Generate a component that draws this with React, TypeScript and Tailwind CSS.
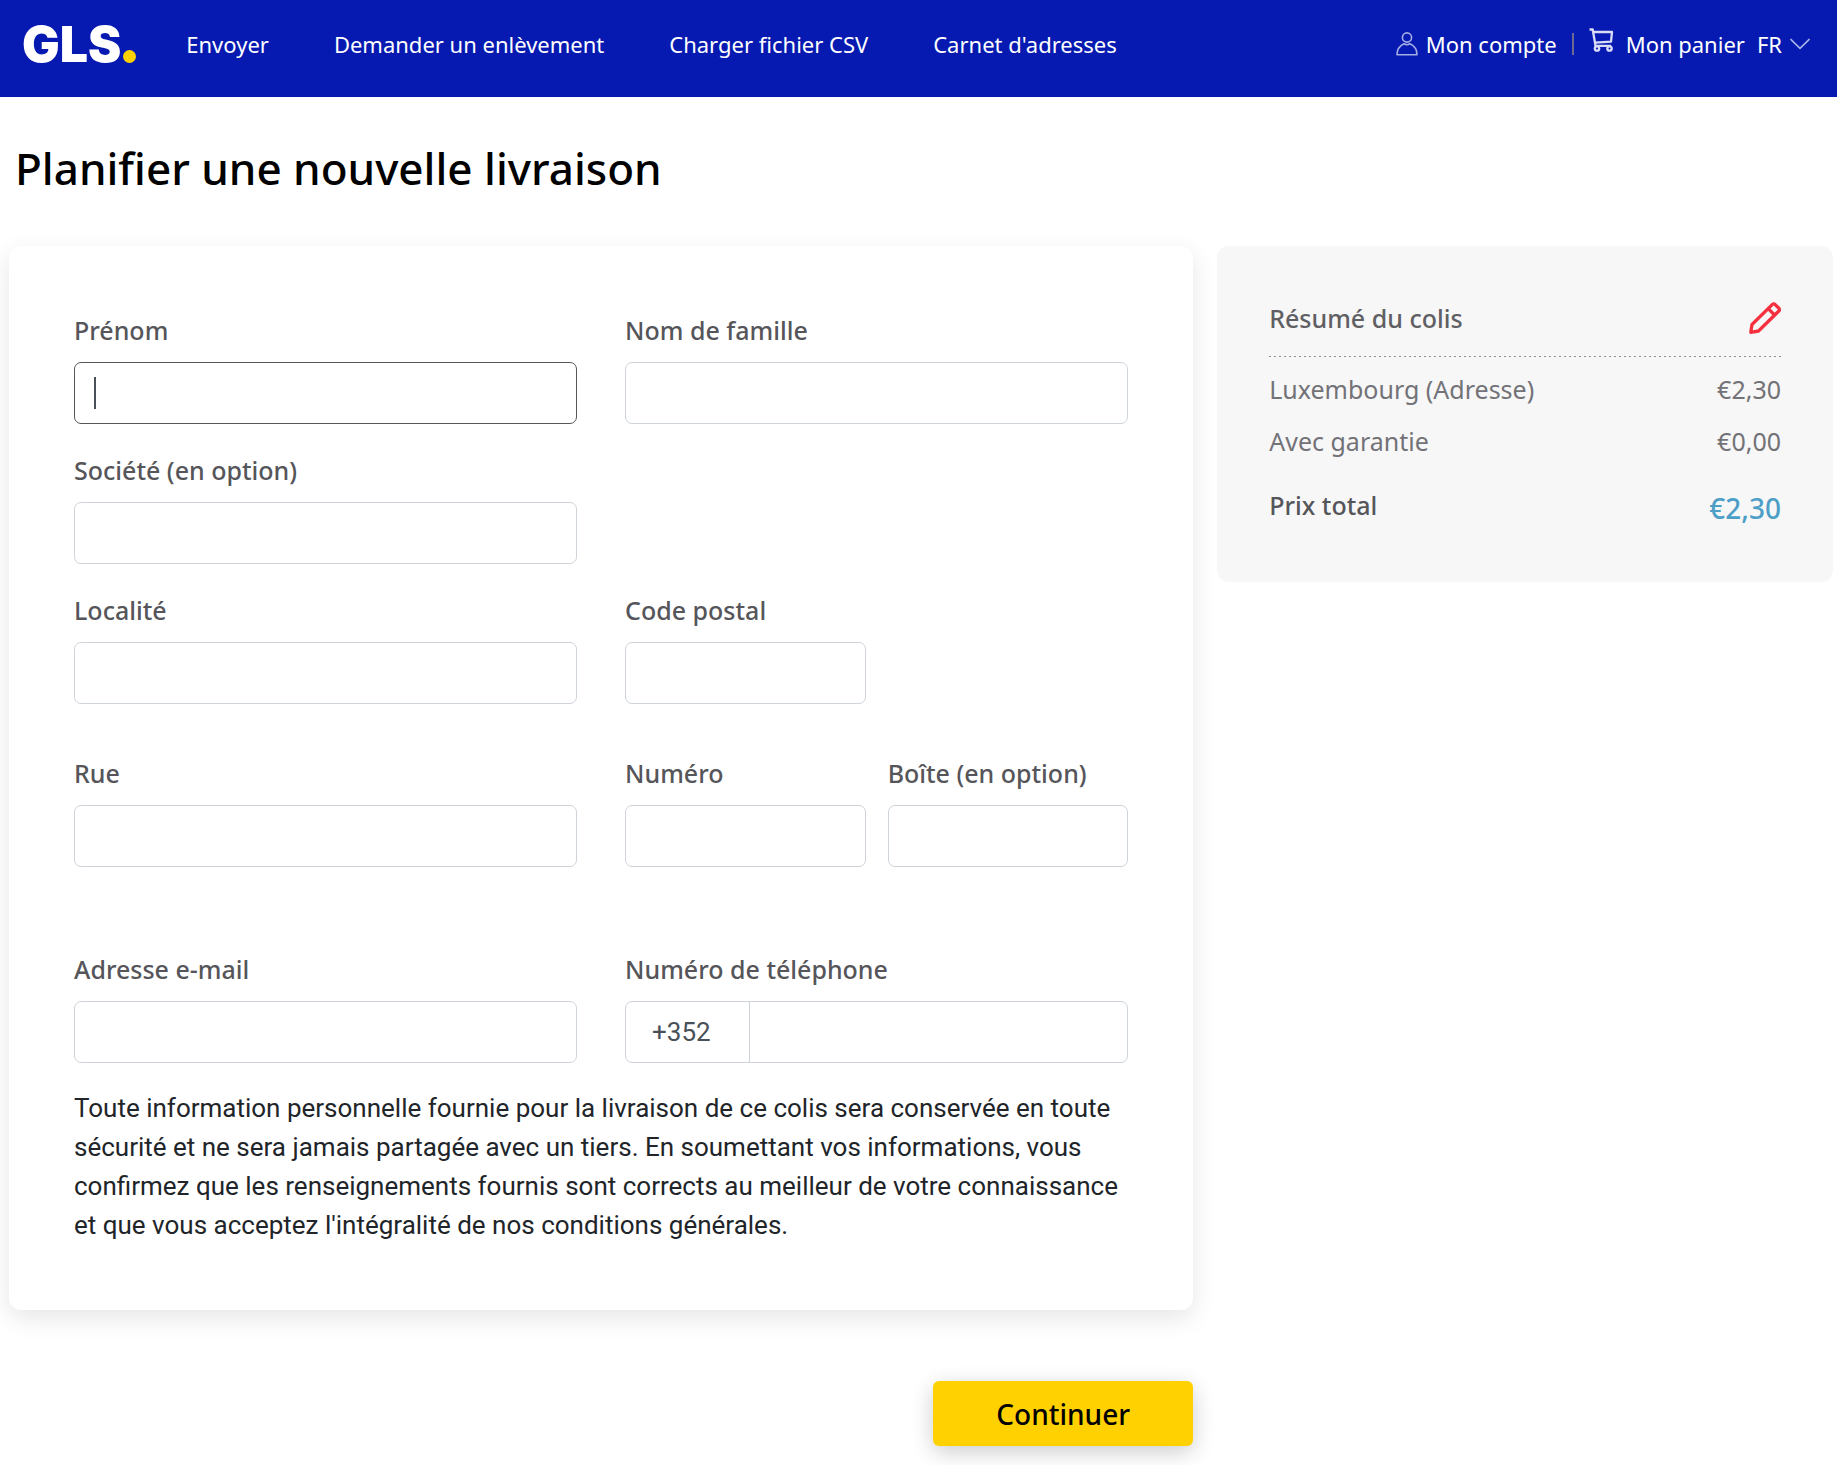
import React from 'react';

const NAV_LINKS = ['Envoyer', 'Demander un enlèvement', 'Charger fichier CSV', "Carnet d'adresses"];

const SUMMARY_LINES = [
  { label: 'Luxembourg (Adresse)', price: '€2,30' },
  { label: 'Avec garantie', price: '€0,00' },
];

const UserIcon: React.FC = () => (
  <svg viewBox="0 0 22 24" className="w-[22px] h-6" fill="none" stroke="#a3ace4" strokeWidth="1.6">
    <circle cx="11" cy="5.5" r="4.6" />
    <path d="M1 22.8c0-5.4 2.8-9 7-11 1.8 1.1 4.2 1.1 6 0 4.2 2 7 5.6 7 11z" strokeLinejoin="round" />
  </svg>
);

const CartIcon: React.FC = () => (
  <svg viewBox="0 0 25 24" className="w-[25px] h-6 mb-2" fill="none" stroke="#d8dcf6" strokeWidth="2.3">
    <path d="M0.5 1.5h3.2l2.8 16.3h15.5" strokeLinejoin="round" />
    <path d="M4.2 4h18.8l-1 9.6-16 1" strokeLinejoin="round" />
    <circle cx="8" cy="20.5" r="2.2" />
    <circle cx="20.5" cy="20.5" r="2.2" />
  </svg>
);

const ChevronIcon: React.FC = () => (
  <svg viewBox="0 0 20 12" className="w-5 h-3" fill="none" stroke="#aab3e6" strokeWidth="1.6">
    <path d="M0.5 1 10 10.3 19.5 1" />
  </svg>
);

const PencilIcon: React.FC = () => (
  <svg viewBox="0 0 32 32" className="w-8 h-8" fill="none" stroke="#f5303f" strokeWidth="3.3" strokeLinejoin="round">
    <path d="M1.8 30.3 3 22.5 23.2 2.6c1-1 2-1 3 0l3.4 3.4c1.2 1.2 1.2 2.2 0 3.2L9.5 29z" />
    <path d="M19.2 6.6 25.6 13" />
  </svg>
);

const Header: React.FC = () => (
  <header className="flex items-start justify-between bg-[#061ab1] pl-[22px] pr-[27px] h-[97px] text-white text-[22px] leading-[30px]">
    <div className="flex items-start">
      <a href="#" className="flex items-end gap-[2px] pt-[14px]">
        <span className="font-[Inter] font-black text-[50px] leading-[60px]">GLS</span>
        <span className="w-[13px] h-[13px] mb-[11px] rounded-full bg-[#ffd100]" />
      </a>
      <nav className="flex gap-[65px] pt-[29px] pl-[50px]">
        {NAV_LINKS.map((link) => (
          <a key={link} href="#">{link}</a>
        ))}
      </nav>
    </div>
    <div className="flex items-center pt-7">
      <a href="#" className="flex items-center gap-2">
        <UserIcon />
        Mon compte
      </a>
      <span className="w-[2px] h-[22px] mx-[15px] bg-[#6b6b8f]" />
      <a href="#" className="flex items-center gap-3">
        <CartIcon />
        Mon panier
      </a>
      <button type="button" className="flex items-center gap-2 ml-3">
        FR
        <ChevronIcon />
      </button>
    </div>
  </header>
);

const inputClass =
  'w-full h-[62px] px-5 rounded-[7px] border border-[#ced4da] bg-white text-[26px] text-[#495057] font-[Roboto] outline-none focus:border-[#55565a]';

const labelClass = 'block mb-[14px] text-[25px] leading-9 font-medium text-[#55555a]';

interface FieldProps {
  id: string;
  label: string;
  type?: string;
  active?: boolean;
}

const Field: React.FC<FieldProps> = ({ id, label, type = 'text', active }) => (
  <div>
    <label htmlFor={id} className={labelClass}>{label}</label>
    <div className="relative">
      <input id={id} type={type} autoFocus={active} className={active ? `${inputClass} caret-transparent` : inputClass} />
      {active && <span className="absolute left-5 inset-y-[15px] w-[2px] bg-[#495057]" />}
    </div>
  </div>
);

const AddressForm: React.FC = () => (
  <div className="px-[65px] pt-[66px] pb-[65px] rounded-xl bg-white shadow-[0_8px_24px_rgba(0,0,0,0.1)]">
    <div className="grid grid-cols-2 gap-x-12 gap-y-7">
      <Field id="firstname" label="Prénom" active />
      <Field id="lastname" label="Nom de famille" />
      <Field id="company" label="Société (en option)" />
      <div />
      <Field id="city" label="Localité" />
      <div className="grid grid-cols-2 gap-[22px]">
        <Field id="zip" label="Code postal" />
      </div>
    </div>
    <div className="grid grid-cols-2 gap-x-12 mt-[51px]">
      <Field id="street" label="Rue" />
      <div className="grid grid-cols-2 gap-[22px]">
        <Field id="number" label="Numéro" />
        <Field id="box" label="Boîte (en option)" />
      </div>
    </div>
    <div className="grid grid-cols-2 gap-x-12 mt-[84px]">
      <Field id="email" label="Adresse e-mail" type="email" />
      <div>
        <label htmlFor="phone" className={labelClass}>Numéro de téléphone</label>
        <div className="flex h-[62px] rounded-[7px] border border-[#ced4da] text-[26px] text-[#495057] font-[Roboto]">
          <span className="flex items-center w-[124px] pl-[26px] border-r border-[#ced4da]">+352</span>
          <input id="phone" type="tel" className="flex-1 min-w-0 px-5 outline-none" />
        </div>
      </div>
    </div>
    <p className="mt-[26px] font-[Roboto] text-[26px] leading-[39px] text-[#212529]">
      Toute information personnelle fournie pour la livraison de ce colis sera conservée en toute sécurité et ne sera
      jamais partagée avec un tiers. En soumettant vos informations, vous confirmez que les renseignements fournis sont
      corrects au meilleur de votre connaissance et que vous acceptez l'intégralité de nos conditions générales.
    </p>
  </div>
);

const ParcelSummary: React.FC = () => (
  <aside className="px-[52px] pt-[54px] pb-[53px] rounded-xl bg-[#f7f7f7] text-[25px] leading-9 text-[#727277]">
    <div className="flex items-center justify-between">
      <h2 className="font-medium text-[#5f5f64]">Résumé du colis</h2>
      <button type="button" aria-label="Modifier">
        <PencilIcon />
      </button>
    </div>
    <div className="h-px mt-5 bg-[repeating-linear-gradient(to_right,#909094_0_2px,transparent_2px_5px)]" />
    <dl className="flex flex-col gap-4 pt-[14px]">
      {SUMMARY_LINES.map((line) => (
        <div key={line.label} className="flex justify-between">
          <dt>{line.label}</dt>
          <dd>{line.price}</dd>
        </div>
      ))}
      <div className="flex justify-between pt-3 font-medium">
        <dt className="text-[#55555a]">Prix total</dt>
        <dd className="text-[28px] leading-[42px] text-[#4e9fc8]">{SUMMARY_LINES[0].price}</dd>
      </div>
    </dl>
  </aside>
);

const App: React.FC = () => (
  <div className="font-['Noto_Sans',sans-serif] bg-white">
    <Header />
    <main className="pl-[9px] pr-1 pb-5">
      <h1 className="pt-[43px] pb-[50px] pl-[6px] text-[44px] leading-[56px] font-medium text-black">
        Planifier une nouvelle livraison
      </h1>
      <form className="grid grid-cols-[25fr_13fr] gap-x-6 items-start">
        <AddressForm />
        <ParcelSummary />
        <div className="flex justify-end mt-[71px]">
          <button
            type="submit"
            className="w-[260px] h-[65px] rounded-md bg-[#ffd100] text-[28px] font-medium text-black shadow-[0_6px_22px_rgba(0,0,0,0.2)]"
          >
            Continuer
          </button>
        </div>
      </form>
    </main>
  </div>
);

export default App;
